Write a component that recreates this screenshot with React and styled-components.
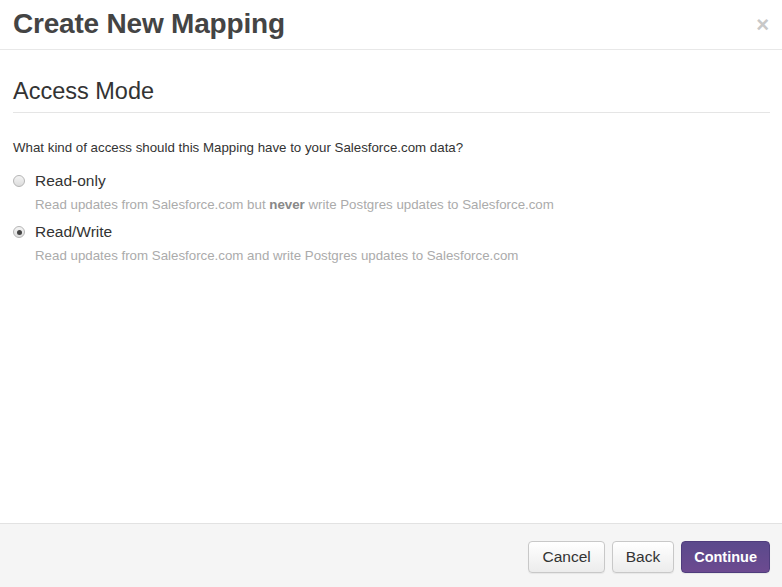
import styled, { createGlobalStyle } from "styled-components";

const GlobalStyle = createGlobalStyle`
    html, body {
        margin: 0;
        padding: 0;
        height: 100%;
        background: #ffffff;
    }
    #root {
        height: 100%;
    }
    * {
        box-sizing: border-box;
    }
`

const options = [
    {
        id: "read-only",
        label: "Read-only",
        checked: false,
        help: <>Read updates from Salesforce.com but <strong>never</strong> write Postgres updates to Salesforce.com</>
    },
    {
        id: "read-write",
        label: "Read/Write",
        checked: true,
        help: <>Read updates from Salesforce.com and write Postgres updates to Salesforce.com</>
    }
];

export default function App() {
    return (
        <Modal>
            <GlobalStyle />
            <Header>
                <Title>Create New Mapping</Title>
                <Close>×</Close>
            </Header>

            <Body>
                <Legend>Access Mode</Legend>
                <Question>What kind of access should this Mapping have to your Salesforce.com data?</Question>

                {options.map(opt => (
                    <Option key={opt.id}>
                        <OptionRow>
                            <Radio checked={opt.checked} />
                            <OptionLabel>{opt.label}</OptionLabel>
                        </OptionRow>
                        <Help>{opt.help}</Help>
                    </Option>
                ))}
            </Body>

            <Footer>
                <Button>Cancel</Button>
                <Button>Back</Button>
                <Button primary>Continue</Button>
            </Footer>
        </Modal>
    )
}

const Modal = styled.div`
    height: 100%;
    display: flex;
    flex-direction: column;
    font-family: "Liberation Sans", Arial, sans-serif;
    color: #333;
`

const Header = styled.div`
    height: 50px;
    flex-shrink: 0;
    display: flex;
    align-items: center;
    justify-content: space-between;
    padding: 0 13px 2px 13px;
    border-bottom: 1px solid #e8e8e8;
`

const Title = styled.h1`
    margin: 0;
    font-size: 28px;
    font-weight: 700;
    color: #444;
    letter-spacing: -0.2px;
`

const Close = styled.span`
    font-size: 22px;
    font-weight: 700;
    line-height: 1;
    color: #c8c8c8;
    margin-top: 2px;
`

const Body = styled.div`
    flex: 1;
    padding: 27px 12px 0 13px;
`

const Legend = styled.h2`
    margin: 0;
    font-size: 23.5px;
    font-weight: 400;
    color: #333;
    line-height: 28px;
    padding-bottom: 7px;
    border-bottom: 1px solid #e5e5e5;
`

const Question = styled.p`
    margin: 27px 0 0 0;
    font-size: 13.3px;
    line-height: 16px;
    color: #333;
`

const Option = styled.div`
    margin-top: 15px;
    & + & {
        margin-top: 9px;
    }
`

const OptionRow = styled.div`
    display: flex;
    align-items: center;
    gap: 10px;
    height: 20px;
`

const Radio = styled.span`
    width: 12px;
    height: 12px;
    border-radius: 50%;
    border: 1px solid #b5b5b5;
    background: linear-gradient(#f4f4f4, #dcdcdc);
    display: flex;
    align-items: center;
    justify-content: center;

    &::after {
        content: "";
        display: ${props => props.checked ? "block" : "none"};
        width: 5px;
        height: 5px;
        border-radius: 50%;
        background: #444;
    }
`

const OptionLabel = styled.span`
    font-size: 15.5px;
    color: #333;
`

const Help = styled.div`
    margin: 6px 0 0 22px;
    font-size: 13.3px;
    line-height: 16px;
    color: #ababab;

    strong {
        color: #888;
        font-weight: 700;
    }
`

const Footer = styled.div`
    height: 64px;
    flex-shrink: 0;
    display: flex;
    align-items: center;
    justify-content: flex-end;
    gap: 7px;
    padding: 2px 12px 0 0;
    background: #f5f5f5;
    border-top: 1px solid #e2e2e2;
`

const Button = styled.button`
    height: 32px;
    padding: 0 ${props => props.primary ? 12 : 13}px;
    border-radius: 4px;
    font-family: "Liberation Sans", Arial, sans-serif;
    font-size: ${props => props.primary ? 14.5 : 15.5}px;
    font-weight: ${props => props.primary ? 700 : 400};
    color: ${props => props.primary ? "#fff" : "#333"};
    border: 1px solid ${props => props.primary ? "#4f3d7d" : "#c8c8c8"};
    background: ${props => props.primary
        ? "linear-gradient(#5b4a8c, #6c4a90)"
        : "linear-gradient(#ffffff, #ececec)"};
    box-shadow: 0 1px 1px rgba(0, 0, 0, 0.06);
`
